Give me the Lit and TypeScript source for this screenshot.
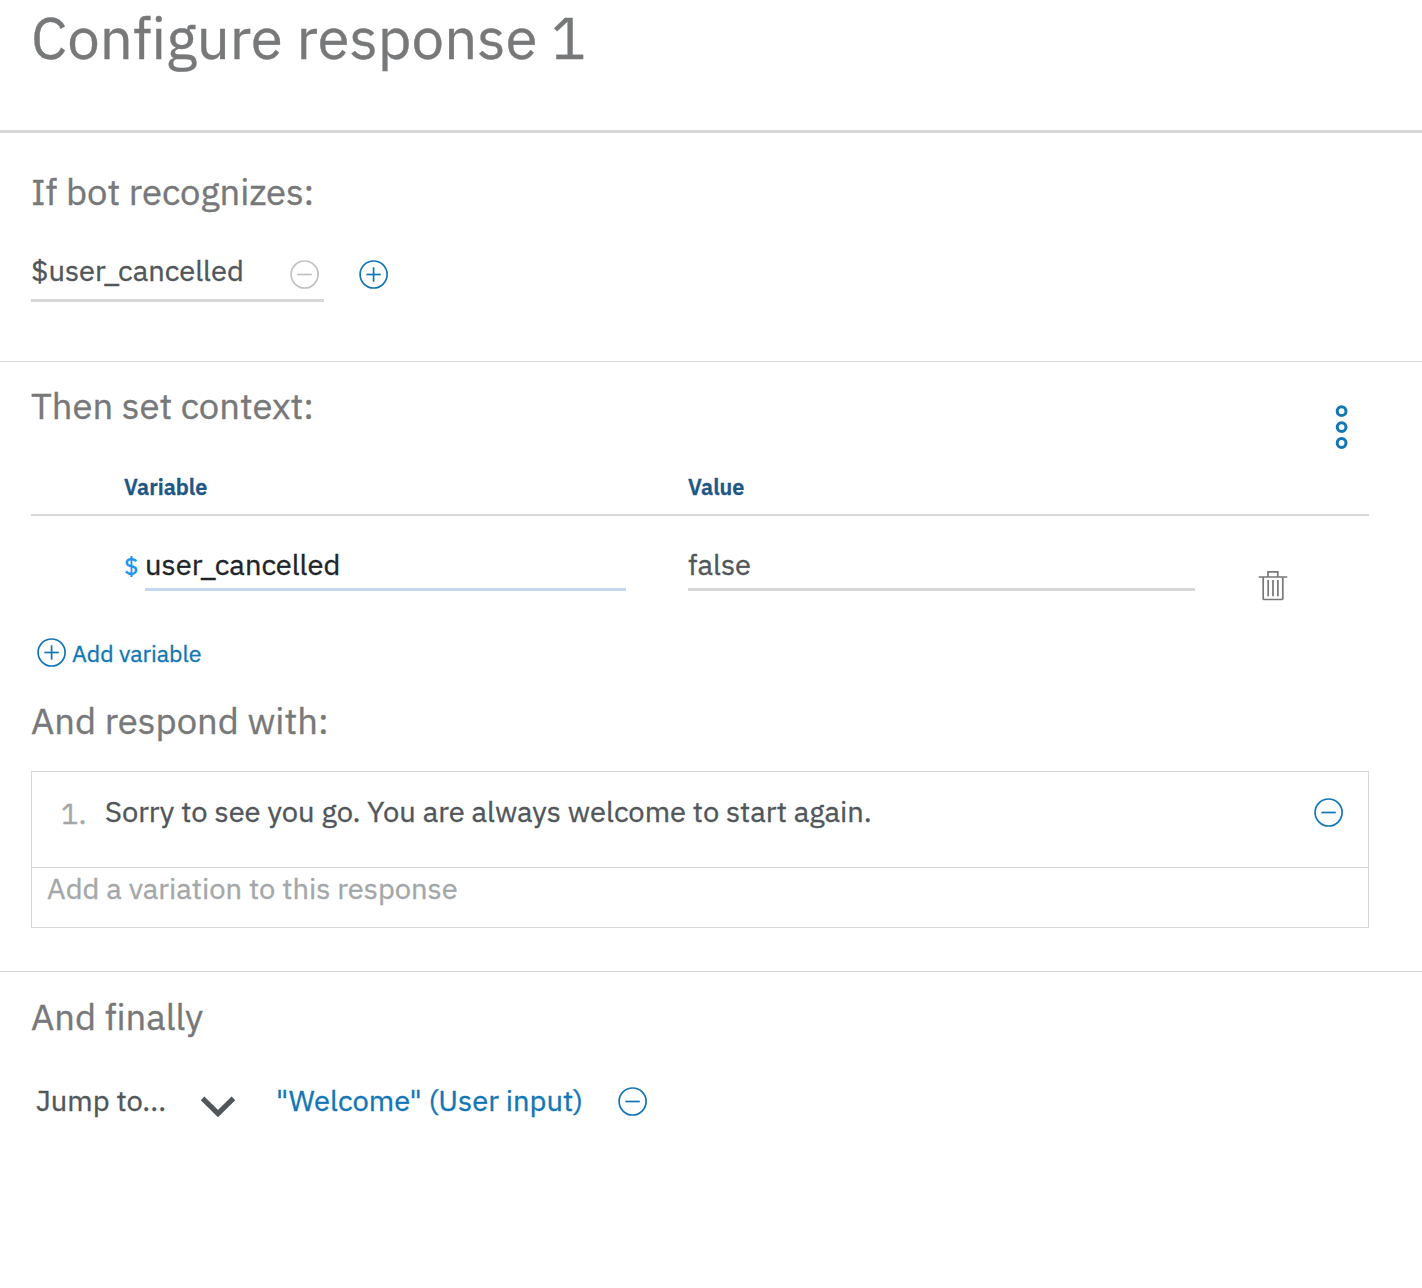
import { LitElement, html, svg, css } from "lit";
import { customElement, property } from "lit/decorators.js";

@customElement("round-icon")
class RoundIcon extends LitElement {
  @property() kind: "plus" | "minus" = "plus";

  static styles = css`
    :host { display: block; flex: none; width: 29px; height: 29px; }
    svg { display: block; }
  `;

  render() {
    return html`<svg width="29" height="29" viewBox="0 0 29 29" fill="none" stroke="currentColor" stroke-width="1.7">
      <circle cx="14.6" cy="14.5" r="13.5"></circle>
      <path d="M7.4 14.5h14.4"></path>
      ${this.kind === "plus" ? svg`<path d="M14.6 7.3v14.4"></path>` : null}
    </svg>`;
  }
}

@customElement("app-root")
class AppRoot extends LitElement {
  static styles = css`
    :host {
      display: block;
      min-height: 1288px;
      background: #fff;
      color: #50565a;
      font-family: "IBM Plex Sans", "Open Sans", sans-serif;
      font-size: 29.1px;
      line-height: 40px;
      font-variant-ligatures: none;
      -webkit-text-stroke: 0.35px currentColor;
    }
    h1, h2 { margin: 0; font-weight: 400; color: #777879; }
    .header { height: 130px; padding-left: 31px; border-bottom: 3px solid #d8d8d8; }
    h1 { font-size: 58.2px; line-height: 75px; }
    h2 { font-size: 36.4px; line-height: 46px; }
    .section { padding: 0 53px 0 31px; }
    .divided { border-bottom: 1px solid #d8d8d8; }
    .condition { padding-top: 36px; padding-bottom: 59px; }
    .context { padding-top: 21px; padding-bottom: 43px; }
    .finally { padding-top: 22px; }
    .blue { color: #1276b6; }

    .tokens { display: flex; margin-top: 35px; gap: 35px; }
    .token {
      display: flex;
      justify-content: space-between;
      box-sizing: border-box;
      width: 293px;
      height: 52px;
      padding-right: 5px;
      border-bottom: 3px solid #d8d8d8;
    }
    .tokens round-icon { margin-top: 10px; }
    .muted { color: #bfc1c3; }

    .bar { display: flex; justify-content: space-between; height: 66px; }
    .kebab { margin: 22px 20px 0 0; }
    .kebab svg, .trash svg { display: block; }

    .row { display: grid; grid-template-columns: 564px 507px 1fr; padding-left: 93px; }
    .labels {
      padding-top: 23px;
      padding-bottom: 12px;
      border-bottom: 2px solid #d8d8d8;
      font-size: 21.7px;
      font-weight: 600;
      line-height: 30px;
      color: #1d5785;
    }
    .values { padding-top: 28px; }
    .name { display: flex; }
    .dollar { width: 21px; font-size: 24px; font-weight: 500; line-height: 44px; color: #1e96ee; -webkit-text-stroke-width: 0; }
    .field { height: 44px; border-bottom: 3px solid #d8d8d8; }
    .field.active { width: 481px; border-color: #c3d8ee; color: #20242a; }
    .trash { margin: 27px 0 0 63px; color: #777879; }

    .add { display: flex; align-items: flex-start; gap: 6px; height: 30px; margin-top: 37px; padding-left: 6px; font-size: 23.1px; line-height: 30px; }
    .respond { margin-top: 30px; }

    .responses { margin-top: 27px; border: 1px solid #d8d8d8; }
    .response { display: flex; box-sizing: border-box; height: 95px; padding: 19px 25px 0 29px; }
    .number { width: 44px; line-height: 44px; color: #a4a5a6; }
    .text { flex: 1; }
    .response round-icon { margin-top: 7px; }
    .placeholder { height: 59px; padding-left: 15px; border-top: 1px solid #d8d8d8; color: #a4a7a9; }

    .jump { display: flex; margin-top: 40px; padding-left: 5px; }
    .action { width: 164px; }
    .chevron { flex: none; width: 36px; margin-top: 16px; }
    .target { margin-left: 40px; width: 342px; }
    .jump round-icon { margin-top: 7px; }
  `;

  render() {
    return html`
      <div class="header"><h1>Configure response 1</h1></div>

      <div class="section divided condition">
        <h2>If bot recognizes:</h2>
        <div class="tokens">
          <div class="token">
            <span>$user_cancelled</span>
            <round-icon class="muted" kind="minus"></round-icon>
          </div>
          <round-icon class="blue" kind="plus"></round-icon>
        </div>
      </div>

      <div class="section divided context">
        <div class="bar">
          <h2>Then set context:</h2>
          <div class="kebab blue">
            <svg width="15" height="44" viewBox="0 0 15 44" fill="none" stroke="currentColor" stroke-width="3">
              <circle cx="7.6" cy="6.2" r="4.4"></circle>
              <circle cx="7.6" cy="22.1" r="4.4"></circle>
              <circle cx="7.6" cy="38" r="4.4"></circle>
            </svg>
          </div>
        </div>
        <div class="row labels"><span>Variable</span><span>Value</span></div>
        <div class="row values">
          <div class="name"><span class="dollar">$</span><div class="field active">user_cancelled</div></div>
          <div class="field">false</div>
          <div class="trash">
            <svg width="30" height="30" viewBox="0 0 30 30" fill="none" stroke="currentColor" stroke-width="1.7">
              <path d="M.7 6h28.6M10 6V.9h9.8V6M5.2 6v21.5a1 1 0 0 0 1 1h17.6a1 1 0 0 0 1-1V6"></path>
              <path d="M10.2 9v16.2M15 9v16.2M19.9 9v16.2"></path>
            </svg>
          </div>
        </div>
        <div class="add blue"><round-icon kind="plus"></round-icon><span>Add variable</span></div>

        <h2 class="respond">And respond with:</h2>
        <div class="responses">
          <div class="response">
            <span class="number">1.</span>
            <span class="text">Sorry to see you go. You are always welcome to start again.</span>
            <round-icon class="blue" kind="minus"></round-icon>
          </div>
          <div class="placeholder">Add a variation to this response</div>
        </div>
      </div>

      <div class="section finally">
        <h2>And finally</h2>
        <div class="jump">
          <span class="action">Jump to...</span>
          <svg class="chevron" width="36" height="22" viewBox="0 0 36 22" fill="none" stroke="currentColor" stroke-width="5.2">
            <path d="M2.6 2.4L18 17.6L33.4 2.4"></path>
          </svg>
          <span class="target blue">"Welcome" (User input)</span>
          <round-icon class="blue" kind="minus"></round-icon>
        </div>
      </div>
    `;
  }
}
